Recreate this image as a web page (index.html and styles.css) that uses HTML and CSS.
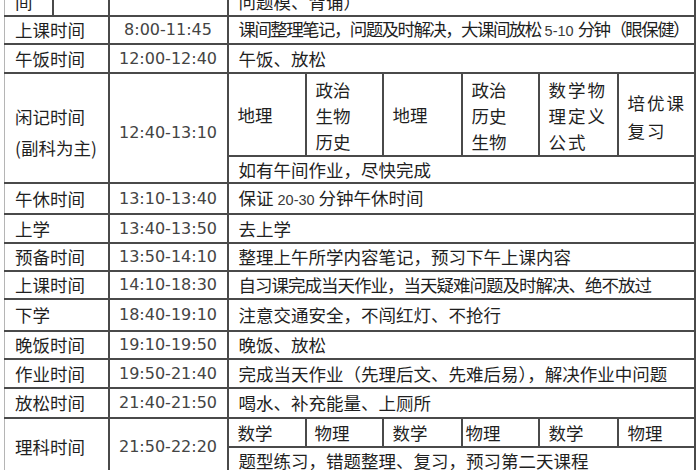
FILE: index.html
```html
<!DOCTYPE html>
<html lang="zh-CN">
<head>
<meta charset="utf-8">
<title>作息时间表</title>
<link rel="stylesheet" href="styles.css">
</head>
<body>
<table class="schedule">
  <colgroup>
    <col class="c1a"><col class="c1b"><col class="c2">
    <col class="s1"><col class="s2"><col class="s3"><col class="s4"><col class="s5"><col class="s6">
  </colgroup>
  <tr class="h-top">
    <td class="lab edge toplab">间</td><td></td><td class="time"></td>
    <td colspan="6" class="txt">问题模、背诵）</td>
  </tr>
  <tr class="h28">
    <td colspan="2" class="lab edge">上课时间</td><td class="time">8:00-11:45</td>
    <td colspan="6" class="txt tight">课间整理笔记，问题及时解决，大课间放松<span class="num">5-10</span>分钟（眼保健）</td>
  </tr>
  <tr class="h29">
    <td colspan="2" class="lab edge">午饭时间</td><td class="time">12:00-12:40</td>
    <td colspan="6" class="txt">午饭、放松</td>
  </tr>
  <tr class="h-sub">
    <td colspan="2" rowspan="2" class="lab edge two">闲记时间<br>(副科为主)</td>
    <td rowspan="2" class="time low">12:40-13:10</td>
    <td class="sub">地理</td>
    <td class="sub multi">政治<br>生物<br>历史</td>
    <td class="sub">地理</td>
    <td class="sub multi">政治<br>历史<br>生物</td>
    <td class="sub multi wide">数学物<br>理定义<br>公式</td>
    <td class="sub multi2 wide">培优课<br>复习</td>
  </tr>
  <tr class="h27">
    <td colspan="6" class="txt">如有午间作业，尽快完成</td>
  </tr>
  <tr class="h31">
    <td colspan="2" class="lab edge">午休时间</td><td class="time">13:10-13:40</td>
    <td colspan="6" class="txt">保证<span class="num">20-30</span>分钟午休时间</td>
  </tr>
  <tr class="h29">
    <td colspan="2" class="lab edge">上学</td><td class="time">13:40-13:50</td>
    <td colspan="6" class="txt">去上学</td>
  </tr>
  <tr class="h28">
    <td colspan="2" class="lab edge">预备时间</td><td class="time">13:50-14:10</td>
    <td colspan="6" class="txt">整理上午所学内容笔记，预习下午上课内容</td>
  </tr>
  <tr class="h28">
    <td colspan="2" class="lab edge">上课时间</td><td class="time">14:10-18:30</td>
    <td colspan="6" class="txt semi">自习课完成当天作业，当天疑难问题及时解决、绝不放过</td>
  </tr>
  <tr class="h32">
    <td colspan="2" class="lab edge">下学</td><td class="time">18:40-19:10</td>
    <td colspan="6" class="txt">注意交通安全，不闯红灯、不抢行</td>
  </tr>
  <tr class="h28">
    <td colspan="2" class="lab edge">晚饭时间</td><td class="time">19:10-19:50</td>
    <td colspan="6" class="txt">晚饭、放松</td>
  </tr>
  <tr class="h29">
    <td colspan="2" class="lab edge">作业时间</td><td class="time">19:50-21:40</td>
    <td colspan="6" class="txt">完成当天作业（先理后文、先难后易），解决作业中问题</td>
  </tr>
  <tr class="h30">
    <td colspan="2" class="lab edge">放松时间</td><td class="time">21:40-21:50</td>
    <td colspan="6" class="txt">喝水、补充能量、上厕所</td>
  </tr>
  <tr class="h29">
    <td colspan="2" rowspan="2" class="lab edge">理科时间</td>
    <td rowspan="2" class="time">21:50-22:20</td>
    <td class="sub">数学</td>
    <td class="sub narrow">物理</td>
    <td class="sub">数学</td>
    <td class="sub tightpad">物理</td>
    <td class="sub">数学</td>
    <td class="sub">物理</td>
  </tr>
  <tr class="h28">
    <td colspan="6" class="txt">题型练习，错题整理、复习，预习第二天课程</td>
  </tr>
</table>
</body>
</html>
```

FILE: styles.css
```css
* { box-sizing: border-box; }
html, body { margin: 0; padding: 0; background: #ffffff; }
body {
  width: 700px;
  height: 470px;
  overflow: hidden;
  font-family: "Noto Sans CJK SC", "Noto Sans", sans-serif;
  color: #1f1f1f;
}
.schedule {
  border-collapse: collapse;
  table-layout: fixed;
  width: 690px;
  margin: -14px 0 0 4px;
  font-size: 17.5px;
}
.c1a { width: 48px; }
.c1b { width: 56px; }
.c2 { width: 119px; }
.s1 { width: 78px; }
.s2 { width: 77px; }
.s3 { width: 79px; }
.s4 { width: 77px; }
.s5 { width: 79px; }
.s6 { width: 77px; }

.schedule td {
  border: 2px solid #4a4a4a;
  padding: 0 0 0 10px;
  vertical-align: middle;
  line-height: 20px;
  white-space: nowrap;
  overflow: hidden;
}
.schedule td.edge { border-left: 1px solid #b5b5b5; }

.h-top { height: 29px; }
.h27 { height: 27px; }
.h28 { height: 28px; }
.h29 { height: 29px; }
.h30 { height: 30px; }
.h31 { height: 31px; }
.h32 { height: 32px; }
.h-sub { height: 83px; }

.schedule td.toplab { vertical-align: bottom; padding-left: 16px; padding-bottom: 3px; }
.schedule td.lab { padding-left: 10px; }
.schedule td.two { line-height: 31px; padding-top: 8px; }

.schedule td.time {
  padding: 0;
  text-align: center;
  font-family: "DejaVu Sans", "Liberation Sans", sans-serif;
  font-size: 16px;
  color: #444444;
}
.schedule td.low { padding-top: 10px; }

.schedule td.txt { padding-left: 10px; }
.tight { letter-spacing: -1.6px; }
.semi { letter-spacing: -1px; }
.num {
  font-family: "Liberation Sans", sans-serif;
  font-size: 14.5px;
  color: #3a3a3a;
  letter-spacing: 0;
  margin: 0 4px;
}

.schedule td.sub { padding-left: 9px; }
.schedule td.narrow { padding-left: 8px; }
.schedule td.tightpad { padding-left: 3px; }
.schedule td.multi { line-height: 26px; padding-top: 2px; }
.schedule td.multi2 { line-height: 28px; padding-top: 4px; }
.wide { letter-spacing: 2px; }
```
